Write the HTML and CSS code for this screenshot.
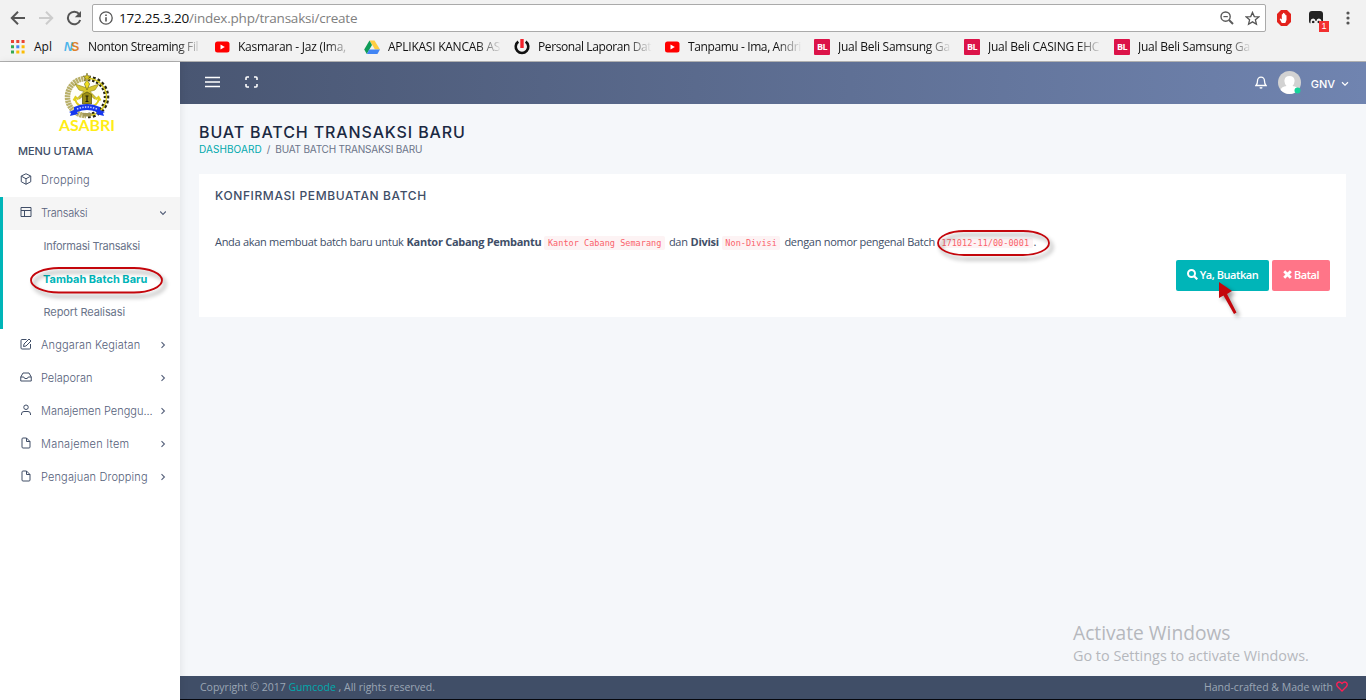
FILE: index.html
```
<!DOCTYPE html>
<html lang="id">
<head>
<meta charset="utf-8">
<title>Buat Batch Transaksi Baru</title>
<link rel="stylesheet" href="styles.css">
</head>
<body>
<svg class="defs" width="0" height="0" aria-hidden="true">
  <symbol id="youtube" viewBox="0 0 16 16"><rect x="1" y="2.5" width="14.5" height="11" rx="2.5" fill="#f00"/><path d="M6.5 5.5v5l4.3-2.5z" fill="#fff"/></symbol>
  <symbol id="right" viewBox="0 0 6 8"><path d="M1.5 1.2 4.4 4 1.5 6.8" fill="none" stroke="currentColor" stroke-width="1.1"/></symbol>
  <symbol id="file" viewBox="0 0 24 24"><path d="M13 2H6a2 2 0 0 0-2 2v16a2 2 0 0 0 2 2h12a2 2 0 0 0 2-2V9zM13 2v7h7" fill="none" stroke="currentColor" stroke-width="2" stroke-linejoin="round"/></symbol>
</svg>
<header class="browser">
  <div class="toolbar">
    <svg class="nav-icon" viewBox="0 0 16 16"><path d="M15 8H2.2M8 1.8 1.8 8 8 14.2" fill="none" stroke="#555" stroke-width="2"/></svg>
    <svg class="nav-icon" viewBox="0 0 16 16"><path d="M1 8h12.8M8 1.8 14.2 8 8 14.2" fill="none" stroke="#ccc" stroke-width="2"/></svg>
    <svg class="nav-icon" viewBox="0 0 16 16"><path d="M13.2 4.1A6.3 6.3 0 1 0 14.2 10" fill="none" stroke="#555" stroke-width="2"/><path d="M15 1v6.2H8.8z" fill="#555"/></svg>
    <div class="omnibox">
      <svg width="14" height="14" viewBox="0 0 14 14"><circle cx="7" cy="7" r="6.2" fill="none" stroke="#555" stroke-width="1.3"/><path d="M7 6.2v4.3M7 3.4v1.5" stroke="#555" stroke-width="1.6"/></svg>
      <span class="url"><b>172.25.3.20</b>/index.php/transaksi/create</span>
      <svg width="14" height="14" viewBox="0 0 14 14"><g fill="none" stroke="#5a5a5a"><circle cx="5.6" cy="5.6" r="4.6" stroke-width="1.4"/><path d="m9 9 4 4" stroke-width="1.9"/><path d="M3.4 5.6h4.4" stroke-width="1.2"/></g></svg>
      <svg class="star" width="15" height="15" viewBox="0 0 16 16"><path d="m8 1.5 1.9 4.4 4.8.4-3.6 3.1 1.1 4.7L8 11.6l-4.2 2.5 1.1-4.7-3.6-3.1 4.8-.4z" fill="none" stroke="#555" stroke-width="1.4"/></svg>
    </div>
    <svg class="adblock" width="16" height="16" viewBox="0 0 16 16"><path d="M5 0h6l4 4v8l-4 4H5l-4-4V4z" fill="#e3221c"/><path d="M5.8 13 3.600 9l.9-.6 1.300 1.200V4.500q.6-.8 1.100 0V3.200q.7-.8 1.200 0v.5q.7-.6 1.200.1v1.500q.8-.8 1.200.1V10l-1.200 3z" fill="#fff"/></svg>
    <div class="extension">
      <svg width="14" height="14" viewBox="0 0 14 14"><path d="M3 0h8q3 0 3 3v7q0 3-3 3H3q-3 0-3-3V3q0-3 3-3z" fill="#222"/><path d="M1.500 14V10q.3-2.500 2.600-2.500T6.600 10h.8q.2-2.500 2.500-2.500T12.500 10v4z" fill="#f2f2f2"/><circle cx="4.200" cy="11" r="1.300" fill="#222"/><circle cx="9.800" cy="11" r="1.300" fill="#222"/><path d="M0 12.500h14V14H0z" fill="#f2f2f2"/></svg>
      <span class="count">1</span>
    </div>
    <svg class="dots" width="4" height="14" viewBox="0 0 4 14"><g fill="#555"><circle cx="2" cy="2" r="1.6"/><circle cx="2" cy="7" r="1.6"/><circle cx="2" cy="12" r="1.6"/></g></svg>
  </div>
  <nav class="bookmarks">
    <a class="apps"><svg width="14" height="14" viewBox="0 0 14 14"><path d="M0 0h3v3H0zM5.3 0h3v3h-3zM10.6 0h3v3h-3z" fill="#e94335"/><path d="M0 5.3h3v3H0zM0 10.6h3v3H0z" fill="#34a853"/><path d="M5.3 5.3h3v3h-3z" fill="#4285f4"/><path d="M10.6 5.3h3v3h-3zM5.3 10.6h3v3h-3zM10.6 10.6h3v3h-3z" fill="#fbbc05"/></svg><span>Apl</span></a>
    <a class="bookmark"><i class="ns"><em>N</em>S</i><span>Nonton Streaming Fil</span></a>
    <a class="bookmark"><svg><use href="#youtube"/></svg><span class="mid">Kasmaran - Jaz (Ima,</span></a>
    <a class="bookmark"><svg viewBox="0 0 16 16"><path d="M5.5 1.5h5L16 10.5h-5z" fill="#ffcd40"/><path d="M5.5 1.5 8 6 2.8 15 .2 10.5z" fill="#0f9d58"/><path d="M5.3 10.5H16L13.4 15H2.8z" fill="#4285f4"/></svg><span class="mid">APLIKASI KANCAB AS</span></a>
    <a class="bookmark"><svg viewBox="0 0 16 16"><path d="M4.3 2.6a6.3 6.3 0 1 0 7.4 0" fill="none" stroke="#111" stroke-width="2.6"/><path d="M8 0v9" stroke="#f3212b" stroke-width="3.4"/></svg><span>Personal Laporan Dat</span></a>
    <a class="bookmark"><svg><use href="#youtube"/></svg><span>Tanpamu - Ima, Andri</span></a>
    <a class="bookmark"><i class="bl">BL</i><span class="mid">Jual Beli Samsung Ga</span></a>
    <a class="bookmark"><i class="bl">BL</i><span class="mid">Jual Beli CASING EHC</span></a>
    <a class="bookmark"><i class="bl">BL</i><span class="mid">Jual Beli Samsung Ga</span></a>
  </nav>
</header>
<div class="app">
  <aside class="sidebar">
    <svg class="logo" width="60" height="62" viewBox="0 0 60 62">
      <path d="M29 6.500a18.500 18.500 0 0 0 0 37" fill="none" stroke="#b9b06a" stroke-width="5.500" stroke-dasharray="2.2 .5"/>
      <path d="M31 6.500a18.500 18.500 0 0 1 0 37" fill="none" stroke="#292713" stroke-width="5.500" stroke-dasharray="2.6 2"/>
      <path d="M31 6.500a18.500 18.500 0 0 1 0 37" fill="none" stroke="#d8cc24" stroke-width="1.500"/>
      <circle cx="30" cy="25" r="15.500" fill="#fffff8"/>
      <path d="m30 1 1 3 3 0-2.4 2 1 3-2.6-2-2.6 2 1-3L26 4h3z" fill="#d6c422" stroke="#55501b" stroke-width=".5"/>
      <path d="m18 12 12 4 12-4-4 6-5 1.500 6 6-1.500 1.500-7.500-7-7.500 7-1.500-1.500 6-6-5-1.500z" fill="#d7c62d" stroke="#8a821f" stroke-width=".6"/>
      <path d="M18 26q1 9 12 9t12-9M16.500 28.500l2-3.500 3 2.500M38.500 27.500l3-2.500 2 3.500" fill="none" stroke="#e0ce1d" stroke-width="2"/>
      <path d="m30 8 2.600 4-2.600 6-2.600-6z" fill="#f0df20" stroke="#655f1a" stroke-width=".6"/>
      <path d="M25.500 22.500 30 20l4.500 2.500V32h-9z" fill="#9b8e16" stroke="#655e13" stroke-width=".8"/><path d="M28.500 24h3M30 24v5M28.500 29.500h3" stroke="#201e0b" stroke-width="1.200"/>
      <path d="M25 41h10l-1 3.500h-8z" fill="#a29858"/>
      <path d="M12 40l5-2v-3q13-6 26 0v3l5 2-2 1 1 3-8-2 1-2q-10-4-20 0l1 2-8 2 1-3z" fill="#1738ef"/>
      <path d="M20 37q10-4 20 0" fill="none" stroke="#c5ceff" stroke-width="1.600" stroke-dasharray="1.4 1.3"/>
      <text x="2" y="58.500" textLength="56" lengthAdjust="spacingAndGlyphs" class="logo-name">ASABRI</text>
    </svg>
    <h2 class="menu-heading">MENU UTAMA</h2>
    <ul class="menu">
      <li><a><svg class="icon" viewBox="0 0 24 24"><path d="m12 1.500 9.500 4.500v11.500L12 22.500l-9.500-5V6zM3 6.500l9 5 9-5M12 11.500v11"/></svg><span class="wide">Dropping</span></a></li>
      <li class="open">
        <a class="current"><svg class="icon" viewBox="0 0 24 24"><path d="M2 3h20v18H2zM2 9h20M9 9v12"/></svg><span class="narrow">Transaksi</span><svg class="chev down"><use href="#right"/></svg></a>
        <ul class="submenu">
          <li><a><span class="narrow">Informasi Transaksi</span></a></li>
          <li><a class="active"><span>Tambah Batch Baru</span>
            <svg class="ring ring-menu" width="142" height="38" viewBox="0 0 142 38"><rect x="6" y="7" width="131" height="24.500" rx="28" ry="12.250"/></svg></a></li>
          <li><a><span class="snug">Report Realisasi</span></a></li>
        </ul>
      </li>
      <li><a><svg class="icon" viewBox="0 0 24 24"><path d="M13 3H4a2 2 0 0 0-2 2v15a2 2 0 0 0 2 2h15a2 2 0 0 0 2-2v-8M18 2l4 4L12 16l-5 1 1-5z"/></svg><span class="loose">Anggaran Kegiatan</span><svg class="chev"><use href="#right"/></svg></a></li>
      <li><a><svg class="icon" viewBox="0 0 24 24"><path d="M22.500 12h-6l-2 3h-5l-2-3h-6M6 4h12l4.500 8v8h-21v-8z"/></svg><span>Pelaporan</span><svg class="chev"><use href="#right"/></svg></a></li>
      <li><a><svg class="icon" viewBox="0 0 24 24"><circle cx="12" cy="6.500" r="4.500"/><path d="M3 22v-2q0-5 5-5h8q5 0 5 5v2"/></svg><span>Manajemen Penggu...</span><svg class="chev"><use href="#right"/></svg></a></li>
      <li><a><svg class="icon"><use href="#file"/></svg><span class="wide">Manajemen Item</span><svg class="chev"><use href="#right"/></svg></a></li>
      <li><a><svg class="icon"><use href="#file"/></svg><span class="loose">Pengajuan Dropping</span><svg class="chev"><use href="#right"/></svg></a></li>
    </ul>
  </aside>
  <div class="page">
    <div class="topbar">
      <svg width="15" height="12" viewBox="0 0 15 12"><path d="M0 1.500h15M0 6h15M0 10.500h15" stroke="#fff" stroke-width="1.700"/></svg>
      <svg class="expand" width="13" height="12" viewBox="0 0 13 12"><path d="M1 4V2q0-1 1-1h2M9 1h2q1 0 1 1v2M12 8v2q0 1-1 1H9M4 11H2q-1 0-1-1V8" fill="none" stroke="#fff" stroke-width="1.600"/></svg>
      <svg class="bell" width="12" height="13" viewBox="0 0 12 13"><path d="M1 9.500q1.500-1.500 1.500-4.500a3.500 3.800 0 0 1 7 0q0 3 1.500 4.500zM4.700 11.500q1.300 1 2.600 0" fill="none" stroke="#fff" stroke-width="1.300"/></svg>
      <svg class="avatar" width="24" height="24" viewBox="0 0 24 24"><circle cx="11.500" cy="11.500" r="11.500" fill="#d2d2d2"/><path d="M2.500 19q1-3.500 6-4-2.500-3-2-6 .5-4 5-4t5 4q.5 3-2 6 5 .5 6 4-9 8-18 0z" fill="#fff"/><circle cx="19.500" cy="19.500" r="3" fill="#16d39a"/></svg>
      <span class="user">GNV</span>
      <svg class="caret" width="8" height="6" viewBox="0 0 8 6"><path d="m1 1.300 3 2.800 3-2.800" fill="none" stroke="#fff" stroke-width="1.200"/></svg>
    </div>
    <main class="content">
      <h1>BUAT BATCH TRANSAKSI BARU</h1>
      <div class="crumbs"><a>DASHBOARD</a><span class="slash">/</span><span class="here">BUAT BATCH TRANSAKSI BARU</span></div>
      <section class="card">
        <h3>KONFIRMASI PEMBUATAN BATCH</h3>
        <p class="sentence"><span>Anda akan membuat batch baru untuk</span><b>Kantor Cabang Pembantu</b><code>Kantor Cabang Semarang</code><span>dan</span><b>Divisi</b><code>Non-Divisi</code><span>dengan nomor pengenal Batch</span><span class="batch"><code>171012-11/00-0001</code>.<svg class="ring ring-code" width="122" height="38" viewBox="0 0 122 38"><rect x="4" y="7" width="111" height="24" rx="26" ry="12"/></svg></span></p>
        <div class="actions">
          <button class="btn confirm"><svg width="11" height="11" viewBox="0 0 11 11"><circle cx="4.500" cy="4.500" r="3.500" fill="none" stroke="#fff" stroke-width="2"/><path d="m7 7 3.300 3.300" stroke="#fff" stroke-width="2.200"/></svg><span>Ya, Buatkan</span></button>
          <button class="btn cancel"><svg width="9" height="9" viewBox="0 0 9 9"><path d="m1.200 1.200 6.600 6.600M7.800 1.200 1.200 7.800" stroke="#fff" stroke-width="2.800"/></svg><span>Batal</span></button>
          <svg class="pointer" width="32" height="44" viewBox="0 0 32 44"><path d="M6 4v16l4.500-2.500L21 36l2.500-1.500L14 16l5-3z" fill="#c4060c"/></svg>
        </div>
      </section>
      <div class="watermark"><div class="wm-title">Activate Windows</div><div class="wm-text">Go to Settings to activate Windows.</div></div>
    </main>
    <footer class="footer"><span class="copy">Copyright © 2017 <a>Gumcode</a> , All rights reserved.</span><span class="made">Hand-crafted &amp; Made with <svg width="12" height="11" viewBox="0 0 12 11"><path d="M6 10 1.500 5.500Q0 3.500 1.500 1.800 3.500 0 6 2.500 8.500 0 10.500 1.800 12 3.500 10.500 5.500z" fill="none" stroke="#ff1f55" stroke-width="1.300"/></svg></span></footer>
  </div>
</div>
</body>
</html>
```
FILE: styles.css
```
* { box-sizing: border-box; }
body { margin: 0; width: 1366px; height: 700px; overflow: hidden; display: flex; flex-direction: column; background: #f5f7fa; font-family: "Open Sans", sans-serif; }
.defs { position: absolute; }
svg { display: block; flex: none; }
h1, h2, h3, p, ul { margin: 0; padding: 0; font-weight: normal; }
ul { list-style: none; }

.browser { height: 62px; flex: none; background: #f2f2f2; border-bottom: 1px solid #b0b0b0; color: #111; }
.toolbar { height: 32px; padding: 4px 15px 0 10px; display: flex; align-items: center; }
.nav-icon { width: 16px; height: 16px; margin-right: 12px; }
.nav-icon:nth-child(3) { margin-right: 10px; }
.omnibox { width: 1174px; flex: none; height: 28px; border: 1px solid #aaa; border-radius: 2px; background: #fff; display: flex; align-items: center; padding: 0 5px 0 6px; }
.url { flex: 1; margin-left: 6px; font-size: 13.5px; letter-spacing: -.22px; color: #808080; }
.url b { font-weight: normal; color: #111; }
.star { margin-left: 11px; }
.adblock { margin-left: 10px; }
.extension { position: relative; margin-left: 17px; }
.count { position: absolute; left: 10px; top: 10px; width: 10px; height: 11px; background: #f23030; color: #fff; font: 9px/11px "Liberation Sans", sans-serif; text-align: center; }
.dots { margin-left: 23px; }
.bookmarks { height: 29px; display: flex; align-items: center; padding-left: 11px; font-size: 12px; white-space: nowrap; }
.apps { width: 53px; display: flex; align-items: center; gap: 9px; }
.bookmark { width: 150px; display: flex; align-items: center; gap: 8px; }
.bookmark svg { width: 16px; height: 16px; }
.bookmark span { width: 114px; letter-spacing: -.4px; -webkit-mask-image: linear-gradient(90deg, #000 78%, transparent); mask-image: linear-gradient(90deg, #000 78%, transparent); }
.bookmark .mid { letter-spacing: -.25px; }
.ns { width: 16px; font: bold 12px "Liberation Sans", sans-serif; color: #df812c; letter-spacing: -1.5px; }
.ns em { font-style: italic; color: #4eb5ea; }
.bl { width: 16px; height: 16px; background: #dc1349; color: #fff; border-radius: 1px; font: bold 9px/16px "Open Sans", sans-serif; text-align: center; letter-spacing: -.5px; }

.app { flex: 1; min-height: 0; display: flex; }
.sidebar { width: 180px; flex: none; background: #fff; box-shadow: 1px 0 8px rgba(0,0,0,.08); padding-top: 10px; font-family: Inter, sans-serif; color: #55607a; z-index: 1; }
.logo { margin-left: 57px; }
.logo-name { font: bold 15.5px Lato, sans-serif; fill: #ffed16; }
.menu-heading { height: 30px; padding: 8px 0 0 18px; font-size: 11px; line-height: 19px; font-weight: 500; color: #404e67; letter-spacing: -.1px; }
.menu { font-size: 11px; font-weight: 300; }
.menu a { height: 33px; display: flex; align-items: center; padding: 0 14px 1px 20px; white-space: nowrap; }
.narrow { letter-spacing: -.25px; }
.submenu .narrow, .submenu .snug { color: #6a748a; }
.snug { letter-spacing: -.1px; }
.loose { letter-spacing: .14px; }
.wide { letter-spacing: .23px; }
.icon { width: 12px; height: 12px; margin: 0 9px 2px 0; color: #404e67; fill: none; stroke: #404e67; stroke-width: 2; stroke-linejoin: round; }
.chev { width: 6px; height: 8px; margin-left: auto; }
.chev.down { transform: rotate(90deg); }
.open { border-left: 3px solid #00b5b8; }
.open > a { padding-left: 17px; background: #f5f5f5; }
.menu .submenu a { padding-left: 40.5px; position: relative; }
.menu .submenu .active { padding-left: 40px; font-weight: 700; color: #00b5b8; }
.ring { position: absolute; overflow: visible; filter: drop-shadow(3px 4px 2px rgba(0,0,0,.4)); }
.ring rect { fill: none; stroke: #c4060c; stroke-width: 1.8; }
.ring-menu { left: 22px; top: -2px; }

.page { flex: 1; display: flex; flex-direction: column; }
.topbar { height: 42px; flex: none; display: flex; align-items: center; padding: 0 16px 2px 25px; background: linear-gradient(90deg, #495672, #7084b0); color: #fff; }
.expand { margin-left: 25px; }
.bell { margin-left: auto; }
.avatar { margin: 2px 0 0 11px; }
.user { margin: 4px 0 0 9px; font: 500 11px Inter, sans-serif; }
.caret { margin: 3px 1px 0 6px; }
.content { flex: 1; display: flex; flex-direction: column; padding: 17px 20px 0 19px; font-family: Inter, sans-serif; }
h1 { font-size: 16px; line-height: 22px; font-weight: 500; color: #1b2942; letter-spacing: .88px; }
.crumbs { font-size: 10px; line-height: 13px; color: #6b7489; display: flex; white-space: nowrap; }
.crumbs a { color: #00a9ad; letter-spacing: .08px; }
.slash { margin: 0 5px; }
.here { letter-spacing: -.2px; }
.card { height: 143px; margin-top: 18px; padding: 12px 16px 0; background: #fff; }
h3 { font-size: 12px; line-height: 19px; font-weight: 500; color: #404e67; letter-spacing: .61px; }
.sentence { margin-top: 27px; height: 20px; display: flex; align-items: center; font: 11px/20px "Open Sans", sans-serif; color: #404e67; white-space: nowrap; letter-spacing: -.29px; }
.sentence b { font-weight: 700; margin-left: 3px; }
.sentence code { font: 8.5px/14px "DejaVu Sans Mono", monospace; letter-spacing: .04px; color: #fa626b; background: #fdf3f4; border-radius: 2px; padding: 0 3.5px; margin: 2px 4px 0 3px; }
.sentence .batch { position: relative; }
.sentence .batch code { margin-right: 1px; }
.ring-code { left: -1px; top: -8px; }
.actions { position: relative; display: flex; justify-content: flex-end; gap: 3px; margin-top: 8px; }
.btn { height: 31px; border: 0; border-radius: 2px; padding: 0 0 2px; color: #fff; display: flex; align-items: center; justify-content: center; gap: 2px; font: 600 11px "Open Sans", sans-serif; letter-spacing: -.45px; }
.confirm { width: 93px; background: #00b5b8; }
.cancel { width: 58px; background: #ff7588; }
.pointer { position: absolute; right: 85px; top: 18px; filter: drop-shadow(3px 3px 2px rgba(0,0,0,.4)); }
.watermark { width: 237px; margin: auto 36px 10px auto; font-family: "Open Sans", sans-serif; color: #b5b8bd; white-space: nowrap; }
.wm-title { font-size: 19.2px; line-height: 24px; }
.wm-text { font-size: 14.4px; line-height: 21px; }
.footer { height: 24px; flex: none; display: flex; justify-content: space-between; align-items: center; padding: 0 18px 2px 20px; background: #404e67; border-bottom: 1px solid #05060c; color: #9ba6b5; font-size: 10.5px; }
.footer a { color: #00a9ad; }
.made { display: flex; gap: 3px; align-items: center; }
```
